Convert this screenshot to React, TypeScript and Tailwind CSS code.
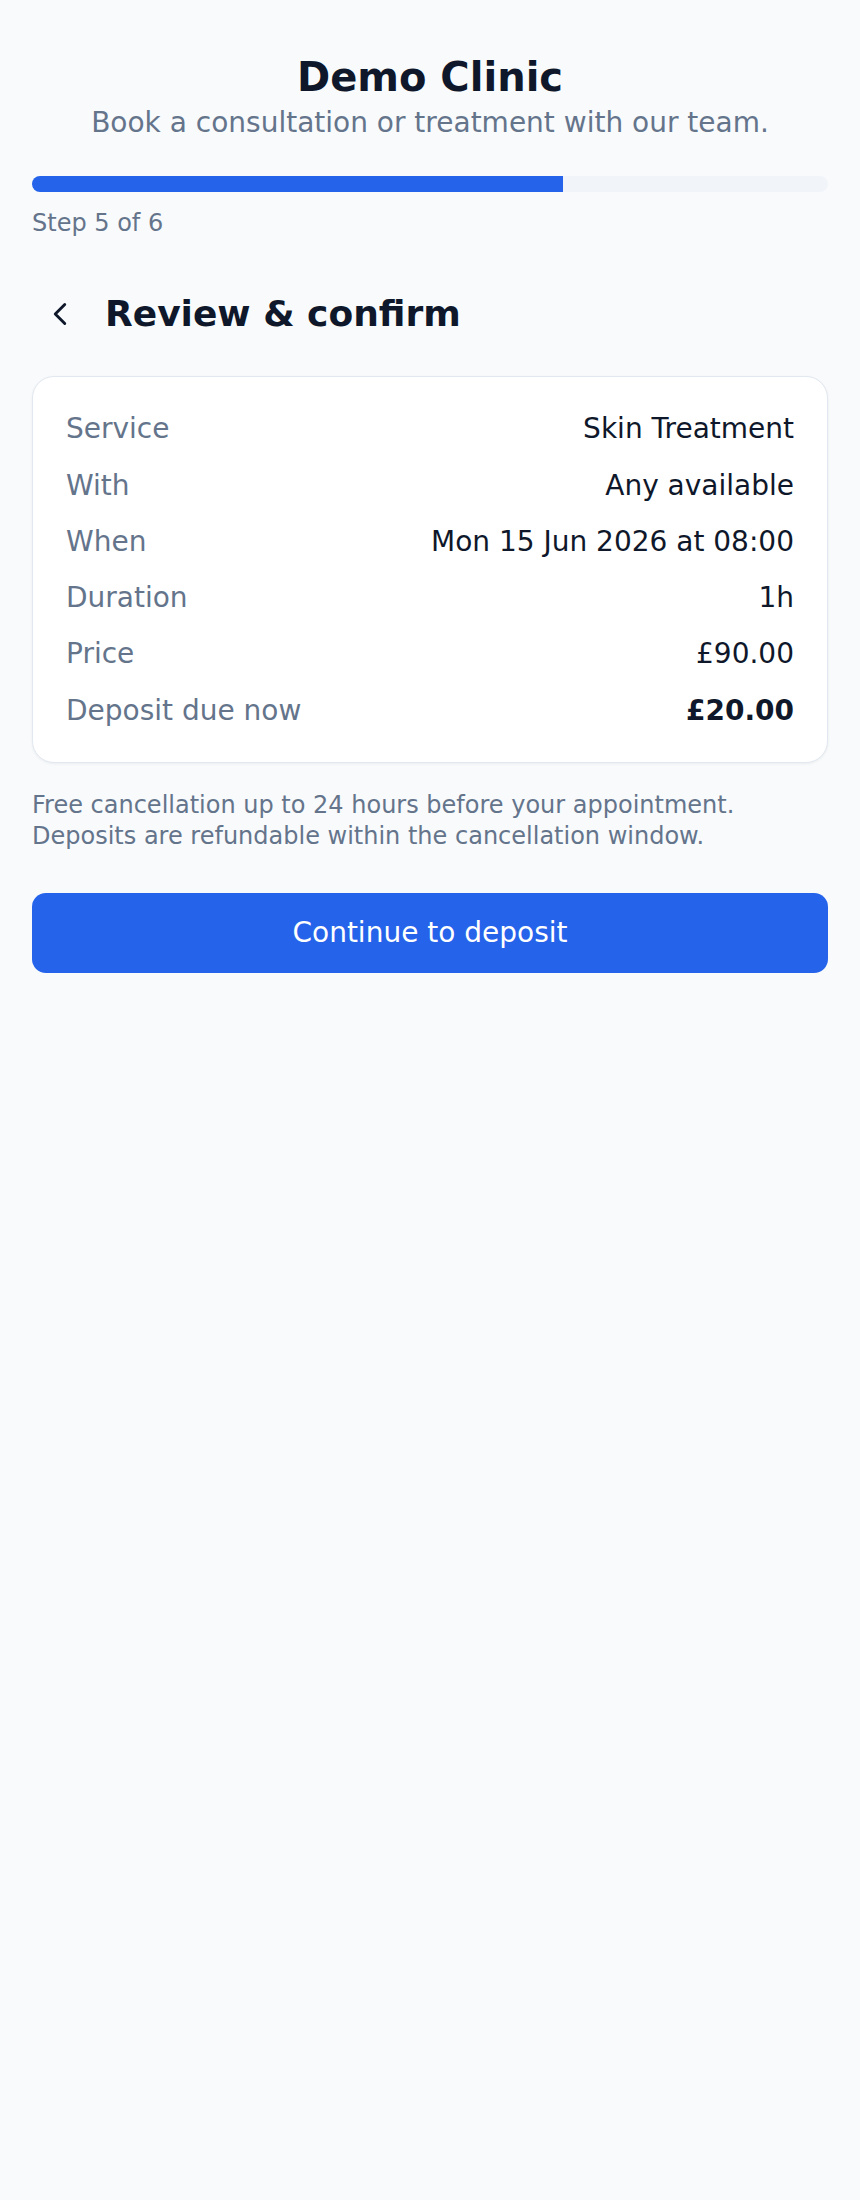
const rows: { label: string; value: string; strong?: boolean }[] = [
  { label: "Service", value: "Skin Treatment" },
  { label: "With", value: "Any available" },
  { label: "When", value: "Mon 15 Jun 2026 at 08:00" },
  { label: "Duration", value: "1h" },
  { label: "Price", value: "£90.00" },
  { label: "Deposit due now", value: "£20.00", strong: true },
]

export default function App() {
  return (
    <div className="min-h-[2200px] bg-[#f8fafc] font-['DejaVu_Sans',sans-serif]">
      <div className="px-8 pt-[54px]">
        {/* Header */}
        <div className="text-center">
          <h1 className="text-[40px] leading-[46px] font-bold text-[#0f172a]">Demo Clinic</h1>
          <p className="mt-[2.5px] text-[28px] leading-[39.4px] text-[#64748b]">
            Book a consultation or treatment with our team.
          </p>
        </div>

        {/* Progress */}
        <div className="mt-[34.3px] h-4 w-full overflow-hidden rounded-full bg-[#f1f5f9]">
          <div className="h-full w-2/3 bg-[#2563eb]" />
        </div>
        <p className="mt-[16px] text-[24px] leading-[31.7px] text-[#64748b]">Step 5 of 6</p>

        {/* Title row */}
        <div className="mt-[46.5px] flex items-center gap-[17px]">
          <button className="flex h-[56px] w-[56px] items-center justify-center text-[#0f172a]">
            <svg width="38" height="38" viewBox="0 0 24 24" fill="none" stroke="currentColor" strokeWidth="1.8" strokeLinecap="round" strokeLinejoin="round">
              <polyline points="15 18 9 12 15 6" />
            </svg>
          </button>
          <h2 className="text-[36px] leading-[46px] font-bold text-[#0f172a]">Review &amp; confirm</h2>
        </div>

        {/* Summary card */}
        <div className="mt-[33.5px] flex flex-col gap-[16.85px] rounded-[22px] border border-[#e2e8f0] bg-white px-[33px] pt-[32.5px] pb-[31.5px] shadow-[0_1px_3px_rgba(15,23,42,0.06)]">
          {rows.map((r) => (
            <div key={r.label} className="flex items-center justify-between text-[28px] leading-[39.4px]">
              <span className="text-[#64748b]">{r.label}</span>
              <span className={r.strong ? "font-bold text-[#0f172a]" : "text-[#0f172a]"}>{r.value}</span>
            </div>
          ))}
        </div>

        {/* Policy note */}
        <p className="mt-[27px] text-[24px] leading-[31.7px] text-[#64748b]">
          Free cancellation up to 24 hours before your appointment.
          <br />
          Deposits are refundable within the cancellation window.
        </p>

        <button className="mt-[40px] flex h-[80px] w-full items-center justify-center rounded-[14px] bg-[#2563eb] text-[28px] text-white">
          Continue to deposit
        </button>
      </div>
    </div>
  )
}
